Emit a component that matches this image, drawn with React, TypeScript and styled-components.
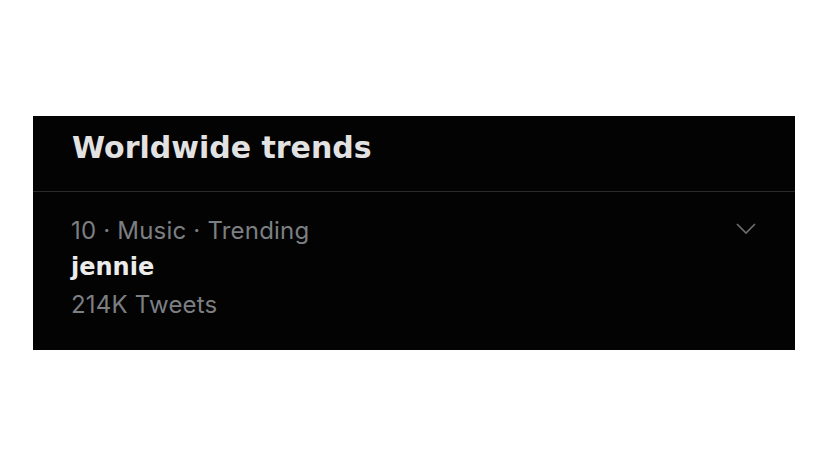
import styled, { createGlobalStyle } from 'styled-components';

const GlobalStyle = createGlobalStyle`
  *, *::before, *::after {
    box-sizing: border-box;
  }
  body {
    margin: 0;
    background: #ffffff;
    font-family: Inter, "Liberation Sans", sans-serif;
  }
`;

const Page = styled.main`
  padding: 116px 0 0 33px;
`;

const Panel = styled.section`
  width: 762px;
  background: #030303;
  display: flex;
  flex-direction: column;
`;

const Header = styled.header`
  height: 76px;
  padding: 14px 39px 0;
  border-bottom: 1px solid #2a2b2d;
`;

const Title = styled.h2`
  margin: 0;
  font-family: "DejaVu Sans", Inter, sans-serif;
  font-size: 30px;
  line-height: 36px;
  font-weight: 700;
  color: #e2e2e2;
`;

const Trend = styled.article`
  height: 158px;
  padding: 20px 38px 0 38px;
  display: flex;
  justify-content: space-between;
  align-items: flex-start;
`;

const TrendText = styled.div`
  display: flex;
  flex-direction: column;
`;

const Meta = styled.span<{ $bold?: boolean }>`
  font-family: ${p => (p.$bold ? '"DejaVu Sans", Inter, sans-serif' : 'Inter, "Liberation Sans", sans-serif')};
  font-size: 24px;
  line-height: 37px;
  font-weight: ${p => (p.$bold ? 700 : 400)};
  color: ${p => (p.$bold ? '#ececec' : '#7c7f82')};
  letter-spacing: ${p => (p.$bold ? '0' : '0.2px')};
`;

const Chevron = styled.svg`
  width: 22px;
  height: 14px;
  margin-top: 10px;
`;

export default function App() {
  return (
    <>
      <GlobalStyle />
      <Page>
        <Panel>
          <Header>
            <Title>Worldwide trends</Title>
          </Header>
          <Trend>
            <TrendText>
              <Meta>10 · Music · Trending</Meta>
              <Meta $bold>jennie</Meta>
              <Meta>214K Tweets</Meta>
            </TrendText>
            <Chevron viewBox="0 0 22 14">
              <path d="M2 2 L11 11 L20 2" fill="none" stroke="#6a6c6e" strokeWidth="1.7" />
            </Chevron>
          </Trend>
        </Panel>
      </Page>
    </>
  );
}
